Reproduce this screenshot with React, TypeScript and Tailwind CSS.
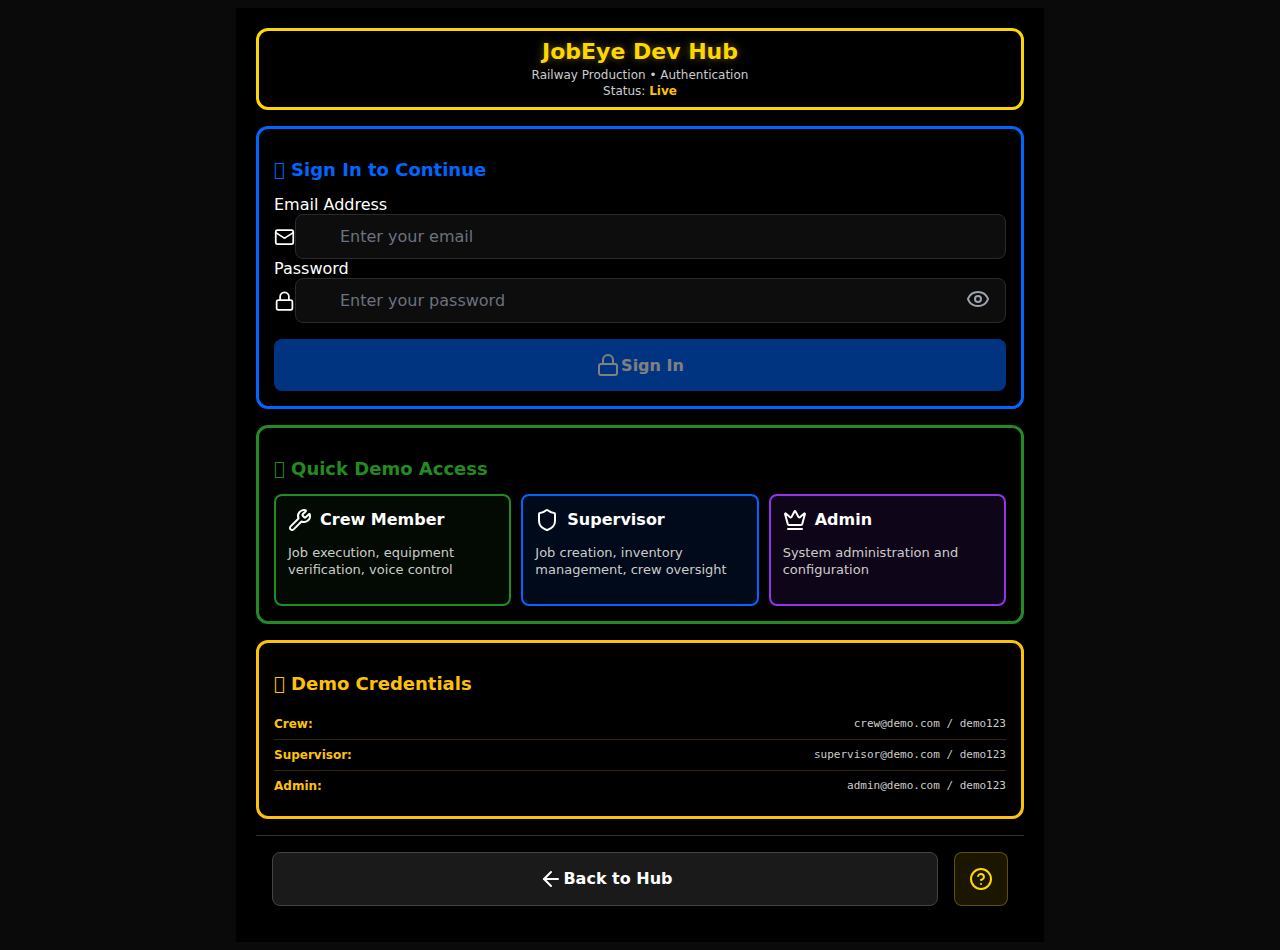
import { ArrowLeft, CircleHelp, Crown, Eye, Lock, Mail, Shield, Wrench } from 'lucide-react'
import type { ReactNode } from 'react'

function DemoCard(props: { icon: ReactNode; title: string; desc: string; className: string }) {
  return (
    <div className={`h-[112px] rounded-lg border-2 p-3 ${props.className}`}>
      <div className="flex items-center gap-2 h-6 mb-3">
        {props.icon}
        <span className="text-base font-bold text-white">{props.title}</span>
      </div>
      <p className="text-[13px] leading-[17px] text-[#cccccc]">{props.desc}</p>
    </div>
  )
}

function CredRow(props: { label: string; value: string; last?: boolean }) {
  return (
    <div className={`flex justify-between items-center ${props.last ? 'h-[30px]' : 'h-[31px] border-b border-[#ffc107]/20'}`}>
      <span className="text-xs font-bold text-[#ffc107]">{props.label}</span>
      <span className="text-[11px] text-[#cccccc] font-['DejaVu_Sans_Mono',monospace]">{props.value}</span>
    </div>
  )
}

export default function App() {
  return (
    <div className="min-h-[950px] bg-[#0a0a0a] py-2 font-['DejaVu_Sans',sans-serif]">
      <div className="w-[808px] h-[934px] mx-auto bg-black px-5 pt-5">
        {/* Header */}
        <div className="h-[82px] rounded-xl border-[3px] border-[#ffd700] flex flex-col items-center pt-[7px] mb-4">
          <h1 className="text-[22px] leading-[28px] mb-px font-bold text-[#ffd700] [text-shadow:0_0_8px_rgba(255,215,0,0.4)]">JobEye Dev Hub</h1>
          <p className="text-xs leading-4 text-[#cccccc]">Railway Production • Authentication</p>
          <p className="text-xs leading-4 text-[#cccccc]">
            Status: <span className="font-bold text-[#ffc107]">Live</span>
          </p>
        </div>

        {/* Sign in */}
        <div className="h-[283px] rounded-xl border-[3px] border-[#0066ff] px-[15px] pt-[27px] mb-4">
          <h2 className="text-lg leading-7 font-bold text-[#0066ff] mb-3">{'\u{E000}'} Sign In to Continue</h2>
          <label className="block text-base leading-[18px] text-white">Email Address</label>
          <div className="flex items-center">
            <Mail className="w-[21px] h-6 text-white" />
            <input
              placeholder="Enter your email"
              className="flex-1 h-[45px] rounded-lg border border-[#2a2a2a] bg-[#0d0d0d] pl-[44px] pr-3 text-base text-white placeholder:text-[#6b7280] outline-none"
            />
          </div>
          <label className="block mt-px text-base leading-[18px] text-white">Password</label>
          <div className="flex items-center">
            <Lock className="w-[21px] h-6 text-white" />
            <div className="relative flex-1">
              <input
                placeholder="Enter your password"
                className="w-full h-[45px] rounded-lg border border-[#2a2a2a] bg-[#0d0d0d] pl-[44px] pr-12 text-base text-white placeholder:text-[#6b7280] outline-none"
              />
              <Eye className="absolute right-[16px] top-[9px] w-6 h-6 text-[#9ca3af]" />
            </div>
          </div>
          <button className="mt-4 w-full h-[52px] rounded-lg bg-[#0066ff] opacity-50 flex items-center justify-center text-base font-bold text-white">
            <Lock className="w-6 h-6" />
            <span className="ml-px mt-0.5">Sign In</span>
          </button>
        </div>

        {/* Demo access */}
        <div className="h-[199px] rounded-xl border-[3px] border-[#228b22] px-[15px] pt-[27px] mb-4">
          <h2 className="text-lg leading-7 font-bold text-[#228b22] mb-[11px]">{'\u{E000}'} Quick Demo Access</h2>
          <div className="grid grid-cols-3 gap-2.5">
            <DemoCard
              className="border-[#228b22] bg-[#030a03]"
              icon={<Wrench className="w-6 h-6 text-white" />}
              title="Crew Member"
              desc="Job execution, equipment verification, voice control"
            />
            <DemoCard
              className="border-[#0066ff] bg-[#000a1a]"
              icon={<Shield className="w-6 h-6 text-white" />}
              title="Supervisor"
              desc="Job creation, inventory management, crew oversight"
            />
            <DemoCard
              className="border-[#9333ea] bg-[#0f0518]"
              icon={<Crown className="w-6 h-6 text-white" />}
              title="Admin"
              desc="System administration and configuration"
            />
          </div>
        </div>

        {/* Credentials */}
        <div className="h-[179px] rounded-xl border-[3px] border-[#ffc107] px-[15px] pt-[27px] mb-4">
          <h2 className="text-lg leading-7 font-bold text-[#ffc107] mb-[11px]">{'\u{E000}'} Demo Credentials</h2>
          <CredRow label="Crew:" value="crew@demo.com / demo123" />
          <CredRow label="Supervisor:" value="supervisor@demo.com / demo123" />
          <CredRow label="Admin:" value="admin@demo.com / demo123" last />
        </div>

        {/* Footer */}
        <div className="border-t border-[#333333] px-4 pt-4 flex gap-4">
          <button className="flex-1 h-[54px] pl-0.5 rounded-lg border border-[#444444] bg-[#1a1a1a] flex items-center justify-center text-base font-bold text-white">
            <ArrowLeft className="w-6 h-6" />
            Back to Hub
          </button>
          <button className="w-[54px] h-[54px] rounded-lg border border-[#ffd700]/30 bg-[#ffd700]/10 flex items-center justify-center">
            <CircleHelp className="w-6 h-6 text-[#ffd700]" />
          </button>
        </div>
      </div>
    </div>
  )
}
